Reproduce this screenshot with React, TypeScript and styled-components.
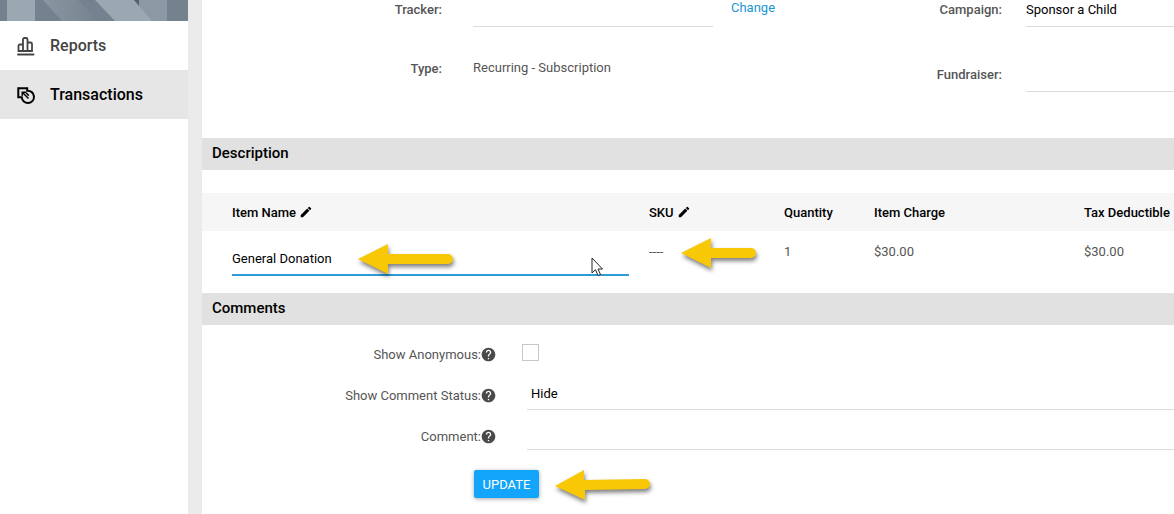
import React from "react";
import styled, { createGlobalStyle } from "styled-components";

const GlobalStyle = createGlobalStyle`
  *, *::before, *::after { box-sizing: border-box; }
  body {
    margin: 0;
    background: #fff;
    color: #555;
    font: 400 13px/18px Roboto, "Liberation Sans", sans-serif;
  }
  input, select, button { font: inherit; }
`;

const Page = styled.div`
  display: grid;
  grid-template-columns: 188px minmax(0, 1fr);
  min-height: 100vh;
  overflow: hidden;
`;

const Sidebar = styled.nav`
  background: #fff;
`;

const Banner = styled.svg`
  display: block;
  width: 100%;
  height: 21px;
`;

const NavLink = styled.a<{ $active?: boolean }>`
  display: flex;
  align-items: center;
  gap: 14px;
  height: 49px;
  padding-left: 16px;
  font-size: 16px;
  font-weight: 500;
  text-decoration: none;
  color: ${(p) => (p.$active ? "#000" : "#444")};
  background: ${(p) => (p.$active ? "#e6e6e6" : "#fff")};
`;

const NavIcon = styled.svg`
  width: 20px;
  height: 20px;
  fill: none;
  stroke: currentColor;
  stroke-width: 2;
`;

const Main = styled.main`
  position: relative;
  border-left: 14px solid #ecebeb;
`;

const Details = styled.section`
  display: grid;
  grid-template-columns: minmax(0, 1fr) 405px;
  min-height: 138px;
`;

const DetailColumn = styled.div<{ $gap: number }>`
  display: flex;
  flex-direction: column;
  gap: ${(p) => p.$gap}px;
`;

const DetailRow = styled.div<{ $label: number; $gap: number }>`
  display: grid;
  grid-template-columns: ${(p) => p.$label}px minmax(0, 1fr);
  column-gap: ${(p) => p.$gap}px;
  align-items: start;
`;

const DetailLabel = styled.label`
  text-align: right;
  font-weight: 500;
  line-height: 20px;
`;

const DetailValue = styled.span`
  line-height: 18px;
`;

const TrackerControl = styled.div`
  display: flex;
  gap: 18px;
`;

const LineInput = styled.input`
  width: 100%;
  height: 27px;
  padding: 0 0 8px;
  border: 0;
  border-bottom: 1px solid #dcdcdc;
  border-radius: 0;
  outline: 0;
  background: transparent;
  color: #000;
`;

const TrackerInput = styled(LineInput)`
  flex: 0 0 240px;
`;

const ChangeLink = styled.a`
  line-height: 16px;
  color: #2196d3;
  text-decoration: none;
`;

const SectionTitle = styled.h2`
  margin: 0;
  padding: 0 10px;
  font-size: 15px;
  font-weight: 500;
  line-height: 30px;
  height: 32px;
  color: #000;
  background: #e1e1e1;
`;

const Items = styled.table`
  width: 100%;
  margin-top: 23px;
  border-collapse: collapse;
  table-layout: fixed;
`;

const HeadCell = styled.th<{ $width?: number }>`
  width: ${(p) => (p.$width ? `${p.$width}px` : "auto")};
  height: 38px;
  padding: 2px 0 0 10px;
  text-align: left;
  white-space: nowrap;
  font-weight: 500;
  color: #000;
  background: #f6f6f6;
  &:first-child { padding-left: 30px; }
`;

const Cell = styled.td`
  height: 62px;
  padding: 12px 10px 0;
  vertical-align: top;
  &:first-child { padding-left: 30px; }
`;

const ItemInput = styled(LineInput)`
  height: 33px;
  padding: 0;
  border-bottom: 2px solid #2e9bd6;
`;

const Pencil = styled.svg`
  width: 14px;
  height: 14px;
  margin-left: 3px;
  vertical-align: -2px;
  fill: currentColor;
`;

const CommentForm = styled.form`
  display: flex;
  flex-direction: column;
  padding-top: 19px;
`;

const FormRow = styled.div`
  display: grid;
  grid-template-columns: 294px minmax(0, 1fr);
  column-gap: 31px;
  align-items: start;
  height: 41px;
`;

const FormLabel = styled.label`
  display: flex;
  justify-content: flex-end;
  align-items: center;
  height: 21px;
  line-height: 21px;
`;

const HelpIcon = styled.svg`
  width: 15px;
  height: 15px;
  fill: #4a4a4a;
`;

const CheckBox = styled.input`
  appearance: none;
  width: 17px;
  height: 17px;
  margin: 0 0 0 -5px;
  border: 1px solid #c6c6c6;
  background: #fff;
`;

const StatusSelect = styled.select`
  appearance: none;
  width: 100%;
  height: 25px;
  padding: 0 4px 10px;
  border: 0;
  border-bottom: 1px solid #dcdcdc;
  border-radius: 0;
  background: transparent;
  color: #000;
`;

const CommentInput = styled(LineInput)`
  height: 24px;
`;

const UpdateButton = styled.button`
  align-self: flex-start;
  width: 65px;
  height: 28px;
  margin: 3px 0 16px 272px;
  padding: 2px 0 0;
  border: 0;
  border-radius: 2px;
  color: #fff;
  background: #12a5fb;
  box-shadow: 0 1px 4px rgba(0, 0, 0, 0.35);
`;

const Arrow = styled.svg<{ $x: number; $y: number }>`
  position: absolute;
  left: ${(p) => p.$x}px;
  top: ${(p) => p.$y}px;
  overflow: visible;
  pointer-events: none;
  fill: #f8c706;
  filter: drop-shadow(1px 3px 2px rgba(0, 0, 0, 0.5));
`;

const Pointer = styled.svg`
  position: absolute;
  left: 389px;
  top: 257px;
  pointer-events: none;
`;

const EditIcon = () => (
  <Pencil viewBox="0 0 24 24" aria-hidden="true">
    <path d="M3 17.25V21h3.75L17.81 9.94l-3.75-3.75L3 17.25zM20.71 7.04a.996.996 0 0 0 0-1.41l-2.34-2.34a.996.996 0 0 0-1.41 0l-1.83 1.83 3.75 3.75 1.83-1.83z" />
  </Pencil>
);

const Help = () => (
  <HelpIcon viewBox="1 1 22 22" aria-hidden="true">
    <path d="M12 2C6.48 2 2 6.48 2 12s4.48 10 10 10 10-4.48 10-10S17.52 2 12 2zm1 17h-2v-2h2v2zm2.07-7.75l-.9.92C13.45 12.9 13 13.5 13 15h-2v-.5c0-1.1.45-2.1 1.17-2.83l1.24-1.26c.37-.36.59-.86.59-1.41 0-1.1-.9-2-2-2s-2 .9-2 2H8c0-2.21 1.79-4 4-4s4 1.79 4 4c0 .88-.36 1.68-.93 2.25z" />
  </HelpIcon>
);

export default function App() {
  return (
    <>
      <GlobalStyle />
      <Page>
        <Sidebar>
          <Banner viewBox="0 0 188 21" preserveAspectRatio="none" aria-hidden="true">
            <defs>
              <linearGradient id="fade" x1="0" x2="1">
                <stop offset="0" stopColor="#8a97a2" />
                <stop offset="1" stopColor="#74838f" />
              </linearGradient>
            </defs>
            <rect width="188" height="21" fill="#73828e" />
            <rect x="7" width="28" height="21" fill="#9ba7b1" />
            <path d="M43 0H78L98 21H62Z" fill="url(#fade)" />
            <path d="M134 0H167V21H150Z" fill="#8c98a3" />
            <path d="M95 0H134L152 21H115Z" fill="#9ba7b1" />
            <path d="M134 0H139V6Z" fill="#566471" />
          </Banner>
          <NavLink href="#reports">
            <NavIcon viewBox="0 0 20 20" aria-hidden="true">
              <path d="M2.500 15V10Q2.500 8.500 4 8.500H7V15ZM7 15V3.500Q7 2 8.500 2H10Q11.500 2 11.500 3.500V15ZM11.500 6.500H14.500Q16 6.500 16 8V15H11.500" strokeWidth="1.800" />
              <path d="M2 18.500H17.500" strokeLinecap="round" />
            </NavIcon>
            Reports
          </NavLink>
          <NavLink href="#transactions" $active>
            <NavIcon viewBox="0 0 20 20" aria-hidden="true">
              <path d="M5.800 12.200H2.300V3.300H11.200V5.800A6.100 6.100 0 1 1 5.800 12.200Z" />
              <path d="M6.200 11V7.200H10" strokeWidth="1.400" />
              <path d="M7 8L12.500 13.500M10 7.800L12.800 10.600" strokeWidth="1.500" />
            </NavIcon>
            Transactions
          </NavLink>
        </Sidebar>
        <Main>
          <Details>
            <DetailColumn $gap={32}>
              <DetailRow $label={240} $gap={31}>
                <DetailLabel htmlFor="tracker">Tracker:</DetailLabel>
                <TrackerControl>
                  <TrackerInput id="tracker" />
                  <ChangeLink href="#change">Change</ChangeLink>
                </TrackerControl>
              </DetailRow>
              <DetailRow $label={240} $gap={31}>
                <DetailLabel as="span">Type:</DetailLabel>
                <DetailValue>Recurring - Subscription</DetailValue>
              </DetailRow>
            </DetailColumn>
            <DetailColumn $gap={38}>
              <DetailRow $label={233} $gap={24}>
                <DetailLabel htmlFor="campaign">Campaign:</DetailLabel>
                <LineInput id="campaign" defaultValue="Sponsor a Child" />
              </DetailRow>
              <DetailRow $label={233} $gap={24}>
                <DetailLabel htmlFor="fundraiser">Fundraiser:</DetailLabel>
                <LineInput id="fundraiser" />
              </DetailRow>
            </DetailColumn>
          </Details>

          <SectionTitle>Description</SectionTitle>
          <Items>
            <thead>
              <tr>
                <HeadCell>Item Name<EditIcon /></HeadCell>
                <HeadCell $width={135}>SKU<EditIcon /></HeadCell>
                <HeadCell $width={90}>Quantity</HeadCell>
                <HeadCell $width={210}>Item Charge</HeadCell>
                <HeadCell $width={100}>Tax Deductible</HeadCell>
              </tr>
            </thead>
            <tbody>
              <tr>
                <Cell><ItemInput aria-label="Item Name" defaultValue="General Donation" /></Cell>
                <Cell>----</Cell>
                <Cell>1</Cell>
                <Cell>$30.00</Cell>
                <Cell>$30.00</Cell>
              </tr>
            </tbody>
          </Items>

          <SectionTitle>Comments</SectionTitle>
          <CommentForm onSubmit={(e) => e.preventDefault()}>
            <FormRow>
              <FormLabel htmlFor="anonymous">Show Anonymous:<Help /></FormLabel>
              <CheckBox id="anonymous" type="checkbox" />
            </FormRow>
            <FormRow>
              <FormLabel htmlFor="status">Show Comment Status:<Help /></FormLabel>
              <StatusSelect id="status" defaultValue="Hide">
                <option>Hide</option>
                <option>Show</option>
              </StatusSelect>
            </FormRow>
            <FormRow>
              <FormLabel htmlFor="comment">Comment:<Help /></FormLabel>
              <CommentInput id="comment" />
            </FormRow>
            <UpdateButton type="submit">UPDATE</UpdateButton>
          </CommentForm>

          <Arrow $x={156} $y={244} width="95" height="30" aria-hidden="true">
            <path d="M0 15L30 0V10H90A5 5 0 0 1 90 20H30V30Z" />
          </Arrow>
          <Arrow $x={479} $y={238} width="76" height="30" aria-hidden="true">
            <path d="M0 15L30 0V10H70A5 5 0 0 1 70 20H30V30Z" />
          </Arrow>
          <Arrow $x={353} $y={470} width="95" height="30" aria-hidden="true">
            <path d="M0 16L29 0V10L90 9A5 5 0 0 1 90 19L30 20V30Z" />
          </Arrow>
          <Pointer width="13" height="20" viewBox="0 0 13 20" aria-hidden="true">
            <path d="M1 1V16L4.500 12.700L7 18.500L9.500 17.500L7 12H11.500Z" fill="#fff" stroke="#222" />
          </Pointer>
        </Main>
      </Page>
    </>
  );
}
